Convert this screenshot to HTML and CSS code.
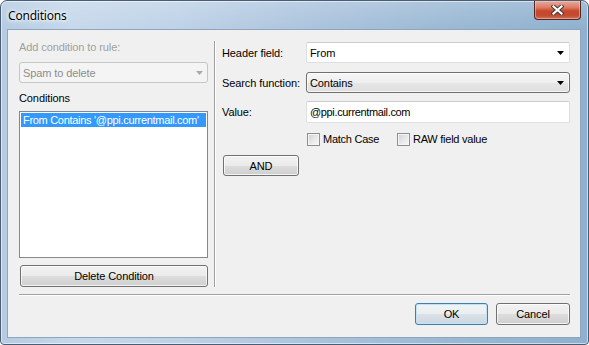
FILE: index.html
```html
<!DOCTYPE html>
<html>
<head>
<meta charset="utf-8">
<title>Conditions</title>
<link rel="stylesheet" href="styles.css">
</head>
<body>
<div class="window">
  <div class="titlebar">
    <span class="title">Conditions</span>
    <div class="close">
      <svg width="13" height="10" viewBox="0 0 13 10">
        <path d="M2.5 1.5 L10.5 8.5 M10.5 1.5 L2.5 8.5" stroke="#3b3b3b" stroke-width="4.2" stroke-linecap="square" fill="none"/>
        <path d="M2.5 1.5 L10.5 8.5 M10.5 1.5 L2.5 8.5" stroke="#ffffff" stroke-width="2.2" stroke-linecap="square" fill="none"/>
      </svg>
    </div>
  </div>
  <div class="client">
    <div class="main">
      <div class="left">
        <div class="lbl lbl-disabled">Add condition to rule:</div>
        <div class="combo combo-disabled">
          <span class="combo-text">Spam to delete</span>
          <svg class="arrow" width="7" height="4" viewBox="0 0 7 4"><polygon points="0,0 7,0 3.5,4" fill="#a9a9a9"/></svg>
        </div>
        <div class="lbl lbl-conditions">Conditions</div>
        <div class="listbox">
          <div class="item item-selected">From Contains '@ppi.currentmail.com'</div>
        </div>
        <button class="btn btn-delete">Delete Condition</button>
      </div>
      <div class="vdiv"></div>
      <div class="right">
        <div class="row row-header">
          <span class="flabel">Header field:</span>
          <div class="combo combo-edit">
            <span class="combo-text">From</span>
            <svg class="arrow" width="7" height="4" viewBox="0 0 7 4"><polygon points="0,0 7,0 3.5,4" fill="#000"/></svg>
          </div>
        </div>
        <div class="row row-search">
          <span class="flabel">Search function:</span>
          <div class="combo combo-list">
            <span class="combo-text">Contains</span>
            <svg class="arrow" width="7" height="4" viewBox="0 0 7 4"><polygon points="0,0 7,0 3.5,4" fill="#000"/></svg>
          </div>
        </div>
        <div class="row row-value">
          <span class="flabel">Value:</span>
          <div class="textbox">@ppi.currentmail.com</div>
        </div>
        <div class="checks">
          <label class="check check-case"><span class="cb"></span><span class="cb-text">Match Case</span></label>
          <label class="check"><span class="cb"></span><span class="cb-text">RAW field value</span></label>
        </div>
        <button class="btn btn-and">AND</button>
      </div>
    </div>
    <div class="hdiv"></div>
    <div class="footer">
      <button class="btn btn-ok">OK</button>
      <button class="btn btn-cancel">Cancel</button>
    </div>
  </div>
</div>
</body>
</html>
```

FILE: styles.css
```css
* { box-sizing: border-box; }

html, body {
  margin: 0;
  padding: 0;
  background: #ffffff;
}

body {
  width: 589px;
  height: 345px;
  overflow: hidden;
  font-family: "Liberation Sans", Arial, sans-serif;
  font-size: 11px;
  letter-spacing: -0.1px;
  color: #000;
}

.window {
  width: 589px;
  height: 345px;
  display: flex;
  flex-direction: column;
  padding: 0 7px 6px 6px;
  border: 1px solid #4a5d73;
  border-radius: 7px 7px 4px 4px;
  background:
    linear-gradient(180deg, rgba(255,255,255,0.18) 0px, rgba(255,255,255,0) 28px),
    linear-gradient(90deg, #b4cbe2 0%, #c6d8eb 12%, #bed2e7 30%, #a9c2dc 55%, #98b7d3 80%, #8fb0ce 100%);
  box-shadow: inset 0 0 0 1px rgba(255,255,255,0.55);
}

.titlebar {
  height: 28px;
  flex: none;
  display: flex;
  align-items: flex-start;
}

.title {
  font-family: "Noto Sans", "Open Sans", sans-serif;
  font-size: 12px;
  line-height: 16px;
  margin-top: 7px;
  margin-left: 1px;
  color: #000;
  letter-spacing: -0.2px;
  text-shadow: 0 0 6px #ffffff, 0 0 4px #ffffff, 0 0 2px rgba(255,255,255,0.9);
}

.close {
  margin-left: auto;
  margin-right: 0;
  width: 47px;
  height: 19px;
  border: 1px solid #4f2a22;
  border-top: none;
  border-radius: 0 0 4px 4px;
  background: linear-gradient(180deg, #e9a99a 0%, #dc7e69 35%, #c8462c 55%, #c24b2f 80%, #d0705a 100%);
  box-shadow: inset 0 0 0 1px rgba(255,220,210,0.45);
  display: flex;
  align-items: center;
  justify-content: center;
}

.close svg { display: block; }

.client {
  flex: 1;
  border: 1px solid #8fa5bc;
  background: #f0f0f0;
  padding: 10px 10px 0 11px;
  display: flex;
  flex-direction: column;
}

.main {
  display: flex;
  height: 247px;
}

.left {
  width: 189px;
  display: flex;
  flex-direction: column;
}

.lbl {
  height: 14px;
  line-height: 14px;
  white-space: nowrap;
}

.lbl-disabled { color: #a0a0a0; }

.lbl-conditions { margin-top: 8px; }

.combo {
  display: flex;
  align-items: center;
  height: 21px;
}

.combo-text {
  padding-left: 3px;
  white-space: nowrap;
}

.arrow {
  display: block;
  margin-left: auto;
  margin-right: 5px;
}

.combo-disabled {
  margin-top: 8px;
  border: 1px solid #c6c6c6;
  border-radius: 3px;
  background: #f4f4f4;
  color: #8d8d8d;
}

.combo-disabled .arrow { margin-right: 4px; }

.listbox {
  margin-top: 6px;
  height: 147px;
  border: 1px solid #828790;
  background: #fff;
  padding: 1px;
  overflow: hidden;
}

.item {
  height: 14px;
  line-height: 14px;
  padding-left: 2px;
  white-space: nowrap;
  overflow: hidden;
  letter-spacing: -0.3px;
}

.item-selected {
  background: #3399ff;
  color: #fff;
}

.btn {
  font-family: "Liberation Sans", Arial, sans-serif;
  font-size: 11px;
  letter-spacing: -0.1px;
  color: #000;
  padding: 0;
  margin: 0;
  border: 1px solid #707070;
  border-radius: 3px;
  background: linear-gradient(180deg, #f2f2f2 0%, #ebebeb 50%, #dddddd 50%, #cfcfcf 100%);
  box-shadow: inset 0 0 0 1px rgba(255,255,255,0.75);
  text-align: center;
}

.btn-delete {
  margin-top: 7px;
  margin-left: 1px;
  width: 188px;
  height: 22px;
}

.vdiv {
  width: 1px;
  margin: 1px 7px 0 6px;
  background: #a0a0a0;
  box-shadow: 1px 0 0 #ffffff;
}

.right {
  width: 348px;
  display: flex;
  flex-direction: column;
}

.row {
  display: flex;
  align-items: center;
}

.flabel {
  width: 84px;
  flex: none;
  white-space: nowrap;
}

.row-header { margin-top: 2px; height: 21px; }
.row-search { margin-top: 9px; height: 21px; }
.row-value  { margin-top: 8px; height: 22px; }

.combo-edit {
  width: 264px;
  height: 21px;
  border: 1px solid #dcdfe4;
  border-top-color: #c9ccd1;
  border-radius: 2px;
  background: #fff;
}

.combo-list {
  width: 264px;
  height: 21px;
  border: 1px solid #707070;
  border-radius: 3px;
  background: linear-gradient(180deg, #f6f6f6 0%, #efefef 50%, #e6e6e6 50%, #e0e0e0 100%);
  box-shadow: inset 0 0 0 1px rgba(255,255,255,0.7);
}

.textbox {
  width: 264px;
  height: 22px;
  border: 1px solid #dcdfe4;
  border-top-color: #c9ccd1;
  border-radius: 2px;
  background: #fff;
  line-height: 20px;
  padding-left: 3px;
  letter-spacing: -0.35px;
  white-space: nowrap;
}

.checks {
  margin-top: 10px;
  height: 13px;
  padding-left: 85px;
  display: flex;
  align-items: center;
}

.check {
  display: flex;
  align-items: center;
  white-space: nowrap;
}

.check-case { width: 90px; }

.cb {
  width: 13px;
  height: 13px;
  flex: none;
  border: 1px solid #8e8f8f;
  background: linear-gradient(135deg, #cdd0d4 0%, #e8e9eb 55%, #f8f8f8 100%);
  box-shadow: inset 0 0 0 1px #f4f4f4;
}

.cb-text {
  margin-left: 3px;
  line-height: 13px;
  letter-spacing: -0.25px;
}

.btn-and {
  margin-top: 9px;
  margin-left: 1px;
  width: 76px;
  height: 21px;
}

.hdiv {
  margin-top: 7px;
  height: 1px;
  background: #a0a0a0;
  box-shadow: 0 1px 0 #ffffff;
}

.footer {
  margin-top: 8px;
  display: flex;
  justify-content: flex-end;
  gap: 8px;
}

.btn-ok, .btn-cancel { height: 22px; }
.btn-ok {
  width: 73px;
  border-color: #3c7fb1;
  box-shadow: inset 0 0 0 1px #bfe3f7;
  background: linear-gradient(180deg, #f1f4f6 0%, #e9eef2 50%, #dbe2e8 50%, #ced7de 100%);
}
.btn-cancel { width: 74px; }
```
